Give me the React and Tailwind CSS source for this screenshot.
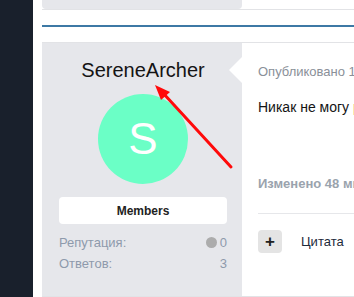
import React from 'react';

export default function App() {
  return (
    <div className="relative flex w-[354px] h-[297px] overflow-hidden bg-white" style={{ fontFamily: '"Liberation Sans", Arial, sans-serif' }}>
      <div className="w-[33px] shrink-0 bg-[#19202c]" />
      <div className="flex-1 pl-[9px] overflow-hidden">
        <div className="w-[500px]">
          {/* previous post tail */}
          <div className="border-b border-[#e2e3e6]">
            <div className="w-[200px] h-[9px] bg-[#e6e7eb] rounded-b-sm" />
          </div>
          <div className="mt-[15px] h-[2px] bg-[#3d79a5]" />

          {/* post */}
          <div className="mt-[15px] flex border-y border-[#e2e3e6]">
            <aside className="relative w-[200px] h-[253px] shrink-0 bg-[#e6e7eb] pt-[15px] pl-[17px] pr-[15px] flex flex-col">
              <div className="text-center text-[20px] leading-[24px] text-[#141414]">SereneArcher</div>
              <div className="mt-[12px] mx-auto w-[90px] h-[90px] rounded-full bg-[#6bffc6] flex items-center justify-center text-white text-[44px] leading-none">
                S
              </div>
              <div className="mt-[13px] h-[27px] bg-white rounded-sm flex items-center justify-center text-[12px] font-bold text-[#222]">
                Members
              </div>
              <div className="mt-[8px] text-[13px] text-[#8e9aab]">
                <div className="h-[21px] flex items-center justify-between">
                  <span>Репутация:</span>
                  <span className="flex items-center gap-[3px]">
                    <span className="w-[11px] h-[11px] rounded-full bg-[#acacac]" />
                    <span>0</span>
                  </span>
                </div>
                <div className="h-[21px] flex items-center justify-between">
                  <span>Ответов:</span>
                  <span>3</span>
                </div>
              </div>
              <div className="absolute right-0 top-[14px] w-0 h-0 border-y-[13px] border-y-transparent border-r-[13px] border-r-white" />
            </aside>

            <div className="flex-1 pl-4 pt-[20px]">
              <div className="text-[13px] leading-[18px] text-[#8a9099] whitespace-nowrap">Опубликовано 12 июня</div>
              <div className="mt-[16px] text-[14px] leading-[20px] text-[#141414] whitespace-nowrap">
                Никак не могу <span className="text-[#c27c2c]">разобраться</span>
              </div>
              <div className="mt-[58px] text-[13px] leading-[18px] font-bold text-[#9aa3ad] whitespace-nowrap">Изменено 48 минут назад</div>
              <div className="mt-[20px] border-t border-[#e6e7ea]" />
              <div className="mt-[16px] flex items-center">
                <div className="w-[24px] h-[23px] rounded bg-[#e4e4e4] flex items-center justify-center text-[17px] font-bold text-[#222] leading-none">
                  +
                </div>
                <span className="ml-[19px] text-[13px] text-[#1d2a3a]">Цитата</span>
              </div>
            </div>
          </div>
        </div>
      </div>

      <svg className="absolute inset-0 pointer-events-none" width="354" height="297">
        <line x1="231" y1="167" x2="163" y2="93" stroke="#ff0a0a" strokeWidth="3" strokeLinecap="round" />
        <polygon points="155,85 170,92 161,100" fill="#ff0a0a" />
      </svg>
    </div>
  );
}
